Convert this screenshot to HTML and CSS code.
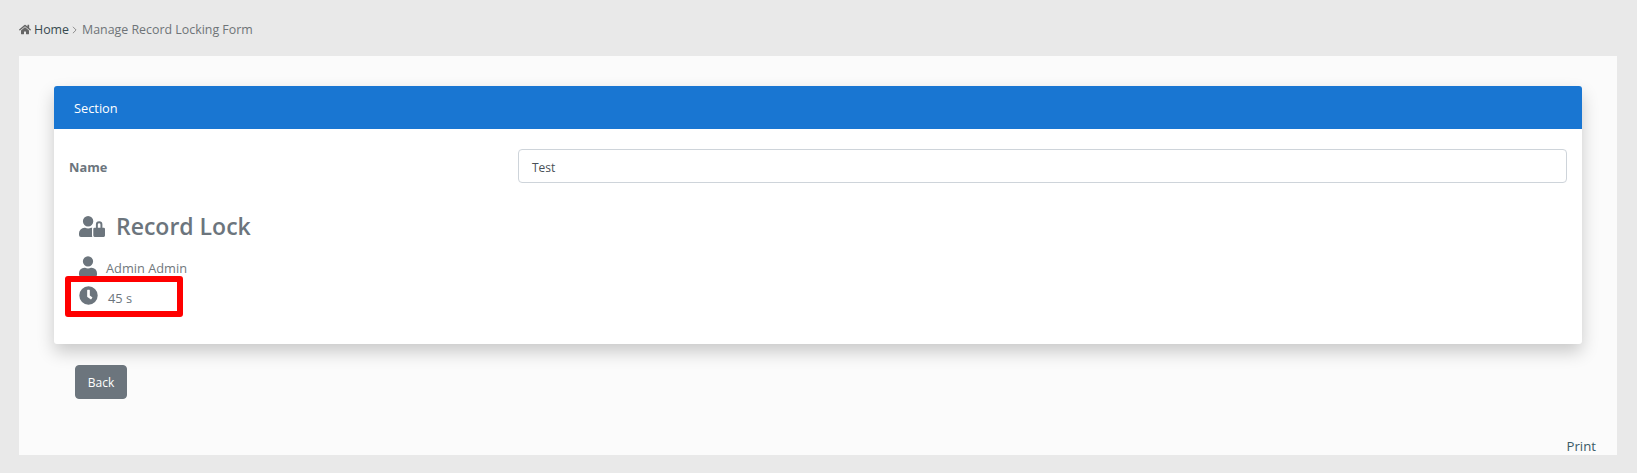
FILE: index.html
```html
<!DOCTYPE html>
<html lang="en">
<head>
<meta charset="utf-8">
<title>Manage Record Locking Form</title>
<link rel="stylesheet" href="styles.css">
</head>
<body>
<nav class="crumbs">
  <svg class="home" viewBox="0 0 576 512"><path d="M280 148 96 300v164a16 16 0 0 0 16 16l112-.3a16 16 0 0 0 16-16V368a16 16 0 0 1 16-16h64a16 16 0 0 1 16 16v95.6a16 16 0 0 0 16 16l112 .4a16 16 0 0 0 16-16V300L296 148a12 12 0 0 0-16 0zm292 103-84-69V44a12 12 0 0 0-12-12h-56a12 12 0 0 0-12 12v72l-89-74a48 48 0 0 0-61 0L4 251a12 12 0 0 0-2 17l26 31a12 12 0 0 0 17 2L280 107a12 12 0 0 1 16 0l235 194a12 12 0 0 0 17-2l26-31a12 12 0 0 0-2-17z"/></svg>
  <a class="crumb-link">Home</a>
  <svg class="crumb-sep" viewBox="0 0 6 10"><path d="M1 1l4 4-4 4"/></svg>
  <span>Manage Record Locking Form</span>
</nav>
<main class="panel">
  <section class="card">
    <header class="card-head">Section</header>
    <div class="card-body">
      <div class="field">
        <label class="field-label">Name</label>
        <div class="field-input">Test</div>
      </div>
      <h2 class="lock-title">
        <svg class="lock-icon" viewBox="0 0 640 512"><path d="M224 256A128 128 0 1 0 96 128a128 128 0 0 0 128 128zm96 64a63 63 0 0 1 8-30.500c-4.800-.5-9.500-1.500-14.500-1.500h-16.700a174 174 0 0 1-145.800 0h-16.700A134.400 134.400 0 0 0 0 422.400V464a48 48 0 0 0 48 48h280.900a63.500 63.500 0 0 1-8.900-32zm288-32h-32v-80a80 80 0 0 0-160 0v80h-32a32 32 0 0 0-32 32v160a32 32 0 0 0 32 32h224a32 32 0 0 0 32-32V320a32 32 0 0 0-32-32zm-80 0h-64v-80a32 32 0 0 1 64 0z"/></svg>
        <span>Record Lock</span>
      </h2>
      <div class="lock-row lock-user">
        <svg class="user-icon" viewBox="0 0 448 512"><path d="M224 256A128 128 0 1 0 96 128a128 128 0 0 0 128 128zm90 32h-17a174 174 0 0 1-146 0h-17A134 134 0 0 0 0 422v42a48 48 0 0 0 48 48h352a48 48 0 0 0 48-48v-42a134 134 0 0 0-134-134z"/></svg>
        <span class="user-text">Admin Admin</span>
      </div>
      <div class="lock-row lock-time">
        <svg class="clock-icon" viewBox="0 0 512 512"><path d="M256 8a248 248 0 1 0 0 496 248 248 0 0 0 0-496zm57 350-88-64a12 12 0 0 1-5-10V116a12 12 0 0 1 12-12h48a12 12 0 0 1 12 12v138l63 46a12 12 0 0 1 3 17l-28 39a12 12 0 0 1-17 2z"/></svg>
        <span class="time-text">45 s</span>
        <div class="highlight"></div>
      </div>
    </div>
  </section>
  <button class="back">Back</button>
  <a class="print">Print</a>
</main>
</body>
</html>
```
FILE: styles.css
```css
* { box-sizing: border-box; }
html, body { margin: 0; height: 100%; }
body {
  height: 473px;
  overflow: hidden;
  background: #e9e9e9;
  font-family: "Open Sans", "Liberation Sans", sans-serif;
  font-size: 12.8px;
  color: #6c757d;
  padding: 19px 20px 18px 19px;
}
.crumbs {
  display: flex;
  align-items: center;
  height: 20px;
  margin-bottom: 17px;
  font-size: 12.4px;
  color: #6f7478;
}
.home { width: 12px; height: 11px; fill: #666; margin-right: 3px; }
.crumb-link { color: #37494f; }
.crumb-sep { width: 5px; height: 8px; margin: 1px 5px 0 3px; fill: none; stroke: #777; stroke-width: 1; }
.panel {
  position: relative;
  height: 399px;
  background: #fbfbfb;
  padding: 30px 35px 0;
}
.card {
  background: #fff;
  height: 258px;
  border-radius: 3px;
  box-shadow: 0 8px 17px rgba(0, 0, 0, .2);
}
.card-head {
  height: 43px;
  display: flex;
  align-items: center;
  padding: 0 20px;
  background: #1976d2;
  color: #fff;
  border-radius: 3px 3px 0 0;
}
.card-body { padding: 20px 15px; }
.field { display: flex; align-items: center; height: 34px; }
.field-label { width: 449px; font-weight: 700; padding-top: 1px; }
.field-input {
  flex: 1;
  height: 34px;
  display: flex;
  align-items: center;
  padding: 2px 13px 0 13px;
  font-size: 12px;
  color: #495057;
  background: #fff;
  border: 1px solid #ced4da;
  border-radius: 4px;
}
.lock-title {
  display: flex;
  align-items: center;
  margin: 21px 0 0 10px;
  height: 44px;
  font-size: 23px;
  font-weight: 600;
  color: #6c757d;
  gap: 11px;
}
.lock-icon { width: 26px; height: 21px; fill: #6c757d; }
.lock-row { position: relative; display: flex; align-items: center; margin-left: 10px; }
.lock-user { height: 28px; margin-top: 6px; gap: 9px; }
.user-icon { width: 18px; height: 21px; fill: #6c757d; margin-top: -4px; }
.user-text { color: #72787d; }
.lock-time { height: 28px; gap: 10px; }
.clock-icon { width: 19px; height: 19px; fill: #6c757d; margin-top: -2px; }
.time-text { padding-top: 4px; }
.highlight {
  position: absolute;
  left: -14px;
  top: -6px;
  width: 118px;
  height: 41px;
  border: 6px solid #f00;
  border-radius: 3px;
}
.back {
  display: block;
  margin: 21px 0 0 21px;
  width: 52px;
  height: 34px;
  padding: 0;
  font: inherit;
  font-size: 12px;
  color: #fff;
  background: #6c757d;
  border: 1px solid #6c757d;
  border-radius: 4px;
}
.print {
  position: absolute;
  right: 21px;
  bottom: 0;
  font-size: 13.2px;
  color: #3a5a66;
}
```
